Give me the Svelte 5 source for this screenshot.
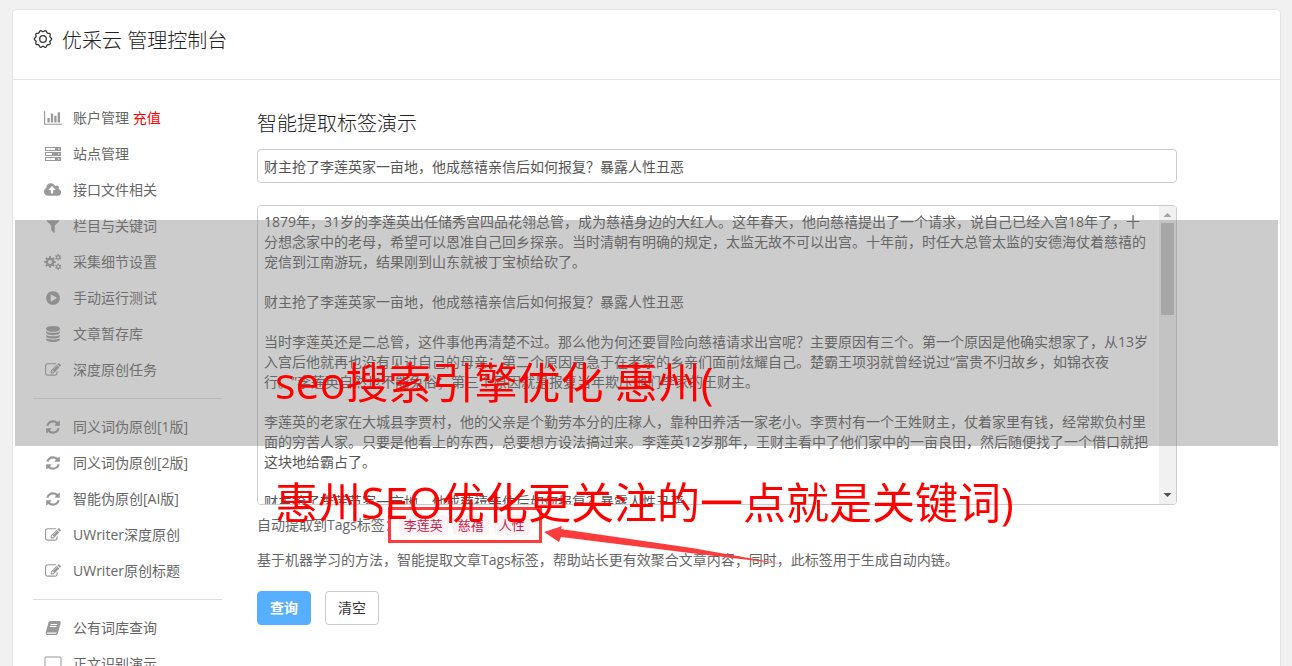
<script>
  const FA = {
    refresh: ['0 0 1792 1792', 'M1639 1056q0 5-1 7-64 268-268 434.5t-478 166.5q-146 0-282.5-55t-243.5-157l-129 129q-19 19-45 19t-45-19-19-45v-448q0-26 19-45t45-19h448q26 0 45 19t19 45-19 45l-137 137q71 66 161 102t187 36q134 0 250-65t186-179q11-17 53-117 8-23 30-23h192q13 0 22.5 9.5t9.5 22.5zm25-800v448q0 26-19 45t-45 19h-448q-26 0-45-19t-19-45 19-45l138-138q-148-137-349-137-134 0-250 65t-186 179q-11 17-53 117-8 23-30 23h-199q-13 0-22.5-9.5t-9.5-22.5v-7q65-268 270-434.5t480-166.5q146 0 284 55.5t245 156.5l130-129q19-19 45-19t45 19 19 45z'],
    edit: ['0 0 1792 1792', 'M888 1184l116-116-152-152-116 116v56h96v96h56zm440-720q-16-16-33 1l-350 350q-17 17-1 33t33-1l350-350q17-17 1-33zm80 594v190q0 119-84.5 203.5t-203.5 84.5h-832q-119 0-203.5-84.5t-84.5-203.5v-832q0-119 84.5-203.5t203.5-84.5h832q63 0 117 25 15 7 18 23 3 17-9 29l-49 49q-14 14-32 8-23-6-45-6h-832q-66 0-113 47t-47 113v832q0 66 47 113t113 47h832q66 0 113-47t47-113v-126q0-13 9-22l64-64q15-15 35-7t20 29zm-96-738l288 288-672 672h-288v-288zm444 132l-92 92-288-288 92-92q28-28 68-28t68 28l152 152q28 28 28 68t-28 68z'],
    play: ['0 0 1792 1792', 'M896 128q209 0 385.5 103t279.5 279.5 103 385.5-103 385.5-279.5 279.5-385.5 103-385.5-103-279.5-279.5-103-385.5 103-385.5 279.5-279.5 385.5-103zm384 823q32-18 32-55t-32-55l-544-320q-31-19-64-1-32 19-32 56v640q0 37 32 56 16 8 32 8 17 0 32-9z'],
    database: ['0 0 1792 1792', 'M896 768q237 0 443-43t325-127v170q0 69-103 128t-280 93.5-385 34.5-385-34.5-280-93.5-103-128v-170q119 84 325 127t443 43zm0 768q237 0 443-43t325-127v170q0 69-103 128t-280 93.5-385 34.5-385-34.5-280-93.5-103-128v-170q119 84 325 127t443 43zm0-384q237 0 443-43t325-127v170q0 69-103 128t-280 93.5-385 34.5-385-34.5-280-93.5-103-128v-170q119 84 325 127t443 43zm0-1152q208 0 385 34.5t280 93.5 103 128v128q0 69-103 128t-280 93.5-385 34.5-385-34.5-280-93.5-103-128v-128q0-69 103-128t280-93.5 385-34.5z'],
    filter: ['0 0 1792 1792', 'M1595 295q17 41-14 70l-493 493v742q0 42-39 59-13 5-25 5-27 0-45-19l-256-256q-19-19-19-45v-486l-493-493q-31-29-14-70 17-39 59-39h1280q42 0 59 39z'],
    cloud: ['0 0 1920 1792', 'M1280 864q0-14-9-23l-352-352q-9-9-23-9t-23 9l-351 351q-10 12-10 24 0 14 9 23t23 9h224v352q0 13 9.5 22.5t22.5 9.5h192q13 0 22.5-9.5t9.5-22.5v-352h224q13 0 22.5-9.5t9.5-22.5zm640 288q0 159-112.5 271.5t-271.5 112.5h-1088q-185 0-316.5-131.5t-131.5-316.5q0-130 70-240t188-165q-2-30-2-43 0-212 150-362t362-150q156 0 285.5 87t188.5 231q71-62 166-62 106 0 181 75t75 181q0 76-41 138 130 31 213.5 135.5t83.5 238.5z'],
    chart: ['0 0 2048 1792', 'M640 896v512h-256v-512h256zm384-512v1024h-256v-1024h256zm1024 1152v128h-2048v-1536h128v1408h1920zm-640-896v768h-256v-768h256zm384-384v1152h-256v-1152h256z'],
    server: ['0 0 18 16', 'M1 1h16v4H1zM1 6h16v4H1zM1 11h16v4H1zM2 2v2h9V2zM2 7v2h6V7zM2 12v2h9v-2zM14 2.500v1h1.500v-1zM14 7.500v1h1.500v-1zM14 12.500v1h1.500v-1z'],
    book: ['0 0 16 16', 'M5 1h9.500q1.600.3 1.200 2l-2.900 10.500q-.5 1.500-2 1.500H2.300Q.2 14.500.7 12.500L3.500 2.500Q4 1 5 1zM5.700 4l-.3 1h6.500l.3-1zM5.100 6l-.3 1h6.500l.3-1zM2 12.800q-.2 1 .8 1h7.700q.8 0 1-.8l.1-.4H2z'],
    desktop: ['0 0 18 16', 'M2 .5h14q1.500 0 1.500 1.500v9q0 1.500-1.500 1.500h-5V14h1.500v1h-7v-1H7v-1.500H2Q.5 12.500.5 11V2Q.5.5 2 .5zM2 1.500q-.5 0-.5.5v8.500h15V2q0-.5-.5-.5z']
  };

  // Closed outline of a toothed wheel.
  function gear(cx, cy, inner, outer, teeth) {
    const pts = [];
    for (let i = 0; i < teeth; i++) {
      for (const [f, r] of [[-0.3, inner], [-0.17, outer], [0.17, outer], [0.3, inner]]) {
        const a = ((i + f) / teeth) * Math.PI * 2 - Math.PI / 2;
        pts.push(`${(cx + Math.cos(a) * r).toFixed(2)} ${(cy + Math.sin(a) * r).toFixed(2)}`);
      }
    }
    return 'M' + pts.join('L') + 'z';
  }

  // Outline of a wheel with soft, rounded lobes.
  function scallop(cx, cy, radius, depth, lobes) {
    const pts = [];
    for (let i = 0; i < 96; i++) {
      const a = (i / 96) * Math.PI * 2;
      const r = radius + depth * Math.cos(a * lobes);
      pts.push(`${(cx + Math.cos(a) * r).toFixed(2)} ${(cy + Math.sin(a) * r).toFixed(2)}`);
    }
    return 'M' + pts.join('L') + 'z';
  }
  const hole = (cx, cy, r) => `M${cx - r} ${cy}a${r} ${r} 0 1 0 ${2 * r} 0a${r} ${r} 0 1 0 ${-2 * r} 0z`;
  FA.cogs = ['0 0 18 16', gear(6, 8, 4.4, 6, 8) + hole(6, 8, 2) + gear(14.2, 3.3, 2.3, 3.3, 6) + hole(14.2, 3.3, 1.1) + gear(14.2, 12.7, 2.3, 3.3, 6) + hole(14.2, 12.7, 1.1)];

  const groups = [
    [
      ['chart', '账户管理', '充值'],
      ['server', '站点管理'],
      ['cloud', '接口文件相关'],
      ['filter', '栏目与关键词'],
      ['cogs', '采集细节设置'],
      ['play', '手动运行测试'],
      ['database', '文章暂存库'],
      ['edit', '深度原创任务']
    ],
    [
      ['refresh', '同义词伪原创[1版]'],
      ['refresh', '同义词伪原创[2版]'],
      ['refresh', '智能伪原创[AI版]'],
      ['edit', 'UWriter深度原创'],
      ['edit', 'UWriter原创标题']
    ],
    [
      ['book', '公有词库查询'],
      ['desktop', '正文识别演示']
    ]
  ];

  const headline = '财主抢了李莲英家一亩地，他成慈禧亲信后如何报复？暴露人性丑恶';
  let title = $state(headline);
  let body = $state([
    '1879年，31岁的李莲英出任储秀宫四品花翎总管，成为慈禧身边的大红人。这年春天，他向慈禧提出了一个请求，说自己已经入宫18年了，十分想念家中的老母，希望可以恩准自己回乡探亲。当时清朝有明确的规定，太监无故不可以出宫。十年前，时任大总管太监的安德海仗着慈禧的宠信到江南游玩，结果刚到山东就被丁宝桢给砍了。',
    headline,
    '当时李莲英还是二总管，这件事他再清楚不过。那么他为何还要冒险向慈禧请求出宫呢？主要原因有三个。第一个原因是他确实想家了，从13岁入宫后他就再也没有见过自己的母亲；第二个原因是急于在老家的乡亲们面前炫耀自己。楚霸王项羽就曾经说过“富贵不归故乡，如锦衣夜行。”李莲英自然也不能免俗；第三个原因就是报复当年欺压他们李家的王财主。',
    '李莲英的老家在大城县李贾村，他的父亲是个勤劳本分的庄稼人，靠种田养活一家老小。李贾村有一个王姓财主，仗着家里有钱，经常欺负村里面的穷苦人家。只要是他看上的东西，总要想方设法搞过来。李莲英12岁那年，王财主看中了他们家中的一亩良田，然后随便找了一个借口就把这块地给霸占了。',
    headline,
    '', '', '', '', '', '', '', ''
  ].join('\n\n'));
  const tags = ['李莲英', '慈禧', '人性'];

  function clear() {
    title = '';
    body = '';
  }
</script>

<div class="page">
  <div class="card">
    <header>
      <svg class="logo" viewBox="0 0 20 20" aria-hidden="true">
        <path d={scallop(10, 10, 8, 0.7, 10)} />
        <circle cx="10" cy="10" r="3.300" />
      </svg>
      <h1>优采云 管理控制台</h1>
    </header>

    <div class="columns">
      <nav>
        {#each groups as group, g}
          {#if g > 0}<hr />{/if}
          <ul>
            {#each group as [icon, label, extra]}
              <li>
                <a href="#top">
                  <span class="icon">
                    <svg viewBox={FA[icon][0]} aria-hidden="true"><path fill-rule="evenodd" d={FA[icon][1]} /></svg>
                  </span>
                  <span>{label}{#if extra}{' '}<em>{extra}</em>{/if}</span>
                </a>
              </li>
            {/each}
          </ul>
        {/each}
      </nav>

      <main>
        <h2>智能提取标签演示</h2>
        <input type="text" aria-label="标题" bind:value={title} />
        <div class="editor">
          <textarea aria-label="正文" bind:value={body}></textarea>
          <div class="scrollbar" aria-hidden="true">
            <svg viewBox="0 0 17 17"><path d="M4.500 11L8.500 7L12.500 11z" fill="#a3a3a3" /></svg>
            <div class="track"><div class="thumb"></div></div>
            <svg viewBox="0 0 17 17"><path d="M4.500 6L8.500 10L12.500 6z" fill="#505050" /></svg>
          </div>
        </div>
        <div class="result">
          <span>自动提取到Tags标签：</span>
          <div class="tags">
            {#each tags as tag}<code>{tag}</code>{/each}
            <svg class="arrow" viewBox="0 0 240 42" aria-hidden="true">
              <path d="M0 7L18 1L17 4L148 23L238 39L146 28L17 12L15 17z" />
            </svg>
          </div>
        </div>
        <p>基于机器学习的方法，智能提取文章Tags标签，帮助站长更有效聚合文章内容；同时，此标签用于生成自动内链。</p>
        <div class="buttons">
          <button class="primary" type="button">查询</button>
          <button type="button" onclick={clear}>清空</button>
        </div>
      </main>
    </div>
  </div>

  <div class="band"></div>
  <div class="caption first">seo搜索引擎优化 惠州(</div>
  <div class="caption second">惠州SEO优化更关注的一点就是关键词)</div>
</div>

<style>
  :global(html) {
    height: 100%;
    overflow: hidden;
    background: #f1f1f1;
  }
  :global(body) {
    height: 100%;
    overflow: hidden;
  }
  .page,
  .page input,
  .page textarea,
  .page button {
    font-family: 'Open Sans', 'Noto Sans CJK SC', sans-serif;
    font-size: 14px;
    font-weight: 400;
    line-height: 20px;
    color: #666;
    text-spacing-trim: space-all;
  }
  .page {
    position: relative;
    padding: 9px 11px 0 12px;
  }
  .page * {
    box-sizing: border-box;
  }
  .card {
    background: #fff;
    border: 1px solid #e4e4e4;
    border-radius: 4px;
  }
  header {
    display: flex;
    gap: 9px;
    align-items: flex-start;
    padding: 16px 20px 23px;
    border-bottom: 1px solid #e4e4e4;
  }
  .logo {
    width: 20px;
    height: 20px;
    margin-top: 3px;
    fill: none;
    stroke: #333;
    stroke-width: 1.3;
  }
  h1,
  h2 {
    margin: 0;
    font-size: 20px;
    font-weight: 300;
    line-height: 30px;
    color: #222;
  }
  .columns {
    display: grid;
    grid-template-columns: 189px minmax(0, 920px);
    gap: 35px;
    padding: 20px;
  }
  ul {
    margin: 0;
    padding: 0;
    list-style: none;
  }
  nav a {
    display: flex;
    align-items: center;
    gap: 10px;
    height: 36px;
    padding-left: 10px;
    color: #666;
    text-decoration: none;
  }
  .icon {
    display: flex;
    justify-content: center;
    width: 20px;
  }
  .icon svg {
    height: 16px;
    fill: #999;
  }
  em {
    font-style: normal;
    color: #f00;
  }
  hr {
    margin: 10px 0;
    border: 0;
    border-top: 1px solid #ddd;
  }
  main {
    display: flex;
    flex-direction: column;
    padding-top: 9px;
  }
  .page input,
  .page textarea {
    width: 100%;
    padding: 6px;
    border: 1px solid #ccc;
    border-radius: 4px;
    background: #fff;
    color: #555;
    outline: none;
  }
  .page input {
    height: 34px;
    margin: 10px 0 22px;
  }
  .editor {
    position: relative;
  }
  .page textarea {
    display: block;
    height: 300px;
    padding-right: 26px;
    resize: none;
    scrollbar-width: none;
  }
  .scrollbar {
    position: absolute;
    top: 1px;
    right: 1px;
    bottom: 1px;
    display: flex;
    flex-direction: column;
    width: 17px;
    border-radius: 0 3px 3px 0;
    background: #f1f1f1;
    pointer-events: none;
  }
  .scrollbar svg {
    width: 17px;
    height: 17px;
  }
  .track {
    flex: 1;
    padding: 0 2px;
  }
  .thumb {
    height: 35%;
    background: #c1c1c1;
  }
  .result {
    display: flex;
    align-items: center;
    height: 36px;
    margin-top: 2px;
  }
  .tags {
    position: relative;
    display: flex;
    gap: 5px;
    height: 36px;
    align-items: center;
    margin-left: -11px;
    padding: 0 9px 0 8px;
    border: 3px solid #fc3c3c;
  }
  code {
    padding: 0 5px;
    border-radius: 4px;
    background: #f9f2f4;
    font-family: 'Open Sans', 'Noto Sans CJK SC', sans-serif;
    font-size: 13px;
    line-height: 20px;
    color: #c7254e;
  }
  .arrow {
    position: absolute;
    left: 153px;
    top: 15px;
    width: 240px;
    height: 42px;
    fill: #fc3c3c;
  }
  p {
    margin: 7px 0 21px;
  }
  .buttons {
    display: flex;
    gap: 14px;
  }
  .page button {
    width: 54px;
    height: 34px;
    padding: 0;
    border: 1px solid #ccc;
    border-radius: 4px;
    background: #fff;
    color: #333;
  }
  .page .primary {
    border-color: #58afff;
    background: #58afff;
    color: #fff;
    font-weight: 700;
  }
  .band {
    position: absolute;
    top: 220px;
    left: 15px;
    right: 14px;
    height: 226px;
    background: rgba(128, 128, 128, 0.4);
    pointer-events: none;
  }
  .caption {
    position: absolute;
    left: 275px;
    font-size: 43px;
    font-weight: 400;
    line-height: 60px;
    color: #f00;
    white-space: nowrap;
    pointer-events: none;
  }
  .first {
    top: 353px;
  }
  .second {
    top: 473px;
  }
</style>
